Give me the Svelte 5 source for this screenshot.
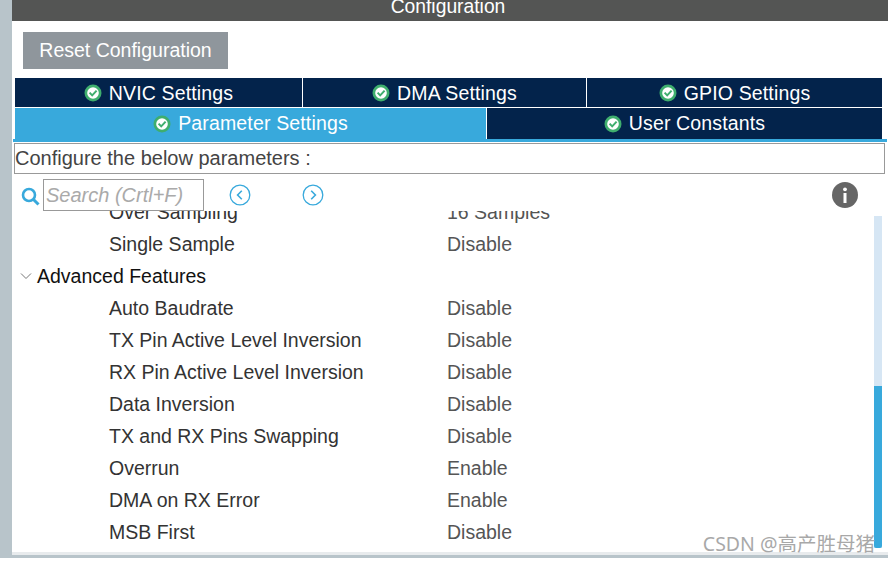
<script>
  const topTabs = ['NVIC Settings', 'DMA Settings', 'GPIO Settings'];

  const before = [
    ['Over Sampling', '16 Samples'],
    ['Single Sample', 'Disable']
  ];
  const advanced = [
    ['Auto Baudrate', 'Disable'],
    ['TX Pin Active Level Inversion', 'Disable'],
    ['RX Pin Active Level Inversion', 'Disable'],
    ['Data Inversion', 'Disable'],
    ['TX and RX Pins Swapping', 'Disable'],
    ['Overrun', 'Enable'],
    ['DMA on RX Error', 'Enable'],
    ['MSB First', 'Disable']
  ];
</script>

{#snippet check()}
  <svg class="check" width="18" height="18" viewBox="0 0 18 18">
    <circle cx="9" cy="9" r="8.5" fill="#3fae6e" />
    <circle cx="9" cy="9" r="5.8" fill="#fff" />
    <path d="M5.6 8.6 L8.2 11.4 L12.6 6.6" fill="none" stroke="#3fae6e" stroke-width="2" />
  </svg>
{/snippet}

{#snippet row(item)}
  <div class="row">
    <span class="name">{item[0]}</span>
    <span class="value">{item[1]}</span>
  </div>
{/snippet}

<div class="window">
  <div class="side"></div>
  <main>
    <div class="title"><span>Configuration</span></div>

    <div class="actions">
      <button class="reset">Reset Configuration</button>
    </div>

    <div class="tabs">
      <div class="tab-row top">
        {#each topTabs as tab}
          <div class="tab">{@render check()}{tab}</div>
        {/each}
      </div>
      <div class="tab-row bottom">
        <div class="tab active">{@render check()}Parameter Settings</div>
        <div class="tab">{@render check()}User Constants</div>
      </div>
    </div>
    <div class="tab-line"></div>

    <div class="hint">Configure the below parameters :</div>

    <div class="search-bar">
      <svg class="lens" width="19" height="19" viewBox="0 0 19 19">
        <circle cx="8" cy="8" r="6" fill="none" stroke="#38a9dc" stroke-width="2.6" />
        <path d="M12.5 12.5 L17.5 17.5" stroke="#38a9dc" stroke-width="3" />
      </svg>
      <div class="search">Search (Crtl+F)</div>
      <svg class="nav prev" width="22" height="22" viewBox="0 0 22 22">
        <circle cx="11" cy="11" r="9.8" fill="none" stroke="#38a9dc" stroke-width="1.3" />
        <path d="M12.8 6.8 L8.6 11 L12.8 15.2" fill="none" stroke="#38a9dc" stroke-width="1.6" />
      </svg>
      <svg class="nav next" width="22" height="22" viewBox="0 0 22 22">
        <circle cx="11" cy="11" r="9.8" fill="none" stroke="#38a9dc" stroke-width="1.3" />
        <path d="M9.2 6.8 L13.4 11 L9.2 15.2" fill="none" stroke="#38a9dc" stroke-width="1.6" />
      </svg>
      <svg class="info" width="26" height="26" viewBox="0 0 26 26">
        <circle cx="13" cy="13" r="13" fill="#666" />
        <rect x="11.5" y="11" width="3" height="10" fill="#fff" />
        <circle cx="13" cy="7.3" r="1.9" fill="#fff" />
      </svg>
    </div>

    <div class="body">
      <div class="list">
        <div class="list-inner">
          {#each before as item}
            {@render row(item)}
          {/each}
          <div class="group">
            <svg width="12" height="8" viewBox="0 0 12 8">
              <path d="M1 1.5 L6 6.5 L11 1.5" fill="none" stroke="#777" stroke-width="1" />
            </svg>
            <span>Advanced Features</span>
          </div>
          {#each advanced as item}
            {@render row(item)}
          {/each}
        </div>
      </div>
      <div class="scrollbar"><div class="thumb"></div></div>
    </div>

    <div class="foot"></div>
    <div class="watermark">CSDN @高产胜母猪</div>
  </main>
</div>

<style>
  :global(body) {
    background: #fff;
  }

  .window {
    display: flex;
    width: 889px;
    height: 563px;
    overflow: hidden;
    font-family: "Liberation Sans", Arial, sans-serif;
    font-size: 19.5px;
  }

  .side {
    width: 12px;
    height: 558px;
    background: #b8c4ca;
    flex: none;
  }

  main {
    position: relative;
    flex: 1;
    min-width: 0;
  }

  .title {
    box-sizing: border-box;
    height: 21px;
    width: 876px;
    padding-right: 4px;
    background: #545554;
    color: #fff;
    font-size: 19.3px;
    line-height: 14px;
    text-align: center;
    overflow: hidden;
  }

  .actions {
    padding: 11px 0 9px 11px;
  }

  .reset {
    display: block;
    width: 205px;
    height: 37px;
    padding: 0;
    border: none;
    background: #8f969c;
    color: #fff;
    font: inherit;
  }

  .tabs {
    margin-left: 3px;
    width: 867px;
    background: #fff;
  }

  .tab-row {
    display: flex;
    gap: 1px;
  }

  .tab {
    box-sizing: border-box;
    display: flex;
    align-items: center;
    justify-content: center;
    gap: 7px;
    background: #03234b;
    color: #fff;
    letter-spacing: 0.15px;
  }

  .top {
    height: 29px;
    margin-bottom: 1px;
  }

  .top .tab {
    padding-top: 1px;
  }

  .top .tab:nth-child(1) { width: 287px; }
  .top .tab:nth-child(2) { width: 283px; }
  .top .tab:nth-child(3) { flex: 1; }

  .bottom {
    height: 31px;
  }

  .bottom .tab { flex: 1; }

  .bottom .tab.active {
    flex: none;
    width: 471px;
    background: #38a9dc;
  }

  .tab-line {
    height: 3px;
    width: 874px;
    margin-left: 1px;
    background: #38a9dc;
  }

  .hint {
    box-sizing: border-box;
    width: 871px;
    height: 31px;
    margin: 1px 0 0 2px;
    border: 1px solid #999;
    color: #444;
    font-size: 20px;
    line-height: 28px;
  }

  .search-bar {
    box-sizing: border-box;
    position: relative;
    z-index: 1;
    display: flex;
    align-items: center;
    height: 37px;
    padding: 5px 0 0 9px;
    background: #fff;
  }

  .lens {
    flex: none;
    margin-top: 2px;
    margin-right: 3px;
  }

  .search {
    box-sizing: border-box;
    width: 161px;
    height: 32px;
    padding-left: 2px;
    border: 1px solid #999;
    color: #aaa;
    font-style: italic;
    font-size: 20px;
    line-height: 30px;
  }

  .nav {
    flex: none;
  }

  .prev { margin-left: 25px; }
  .next { margin-left: 51px; }

  .info {
    flex: none;
    margin-left: 508px;
  }

  .body {
    display: flex;
    height: 341px;
  }

  .list {
    width: 862px;
    overflow: hidden;
  }

  .list-inner {
    margin-top: -15px;
  }

  .row,
  .group {
    display: flex;
    align-items: center;
    height: 32px;
  }

  .row {
    padding-left: 97px;
    color: #333;
  }

  .name {
    width: 338px;
    flex: none;
  }

  .value {
    color: #555;
  }

  .group {
    padding-left: 8px;
    gap: 5px;
    color: #111;
  }

  .scrollbar {
    width: 8px;
    height: 332px;
    margin-top: 5px;
    background: #d6e6f4;
  }

  .thumb {
    height: 162px;
    transform: translateY(170px);
    background: #38a9dc;
    border-radius: 0 0 2px 2px;
  }

  .foot {
    height: 3px;
    background: #e8ebed;
    border-bottom: 3px solid #b8c4ca;
    width: 876px;
  }

  .watermark {
    position: absolute;
    right: 14px;
    top: 531px;
    color: #9a9a9a;
    font-family: "Noto Sans", "Noto Sans CJK SC", sans-serif;
    font-size: 19.5px;
    line-height: 26px;
    opacity: 0.85;
  }
</style>
